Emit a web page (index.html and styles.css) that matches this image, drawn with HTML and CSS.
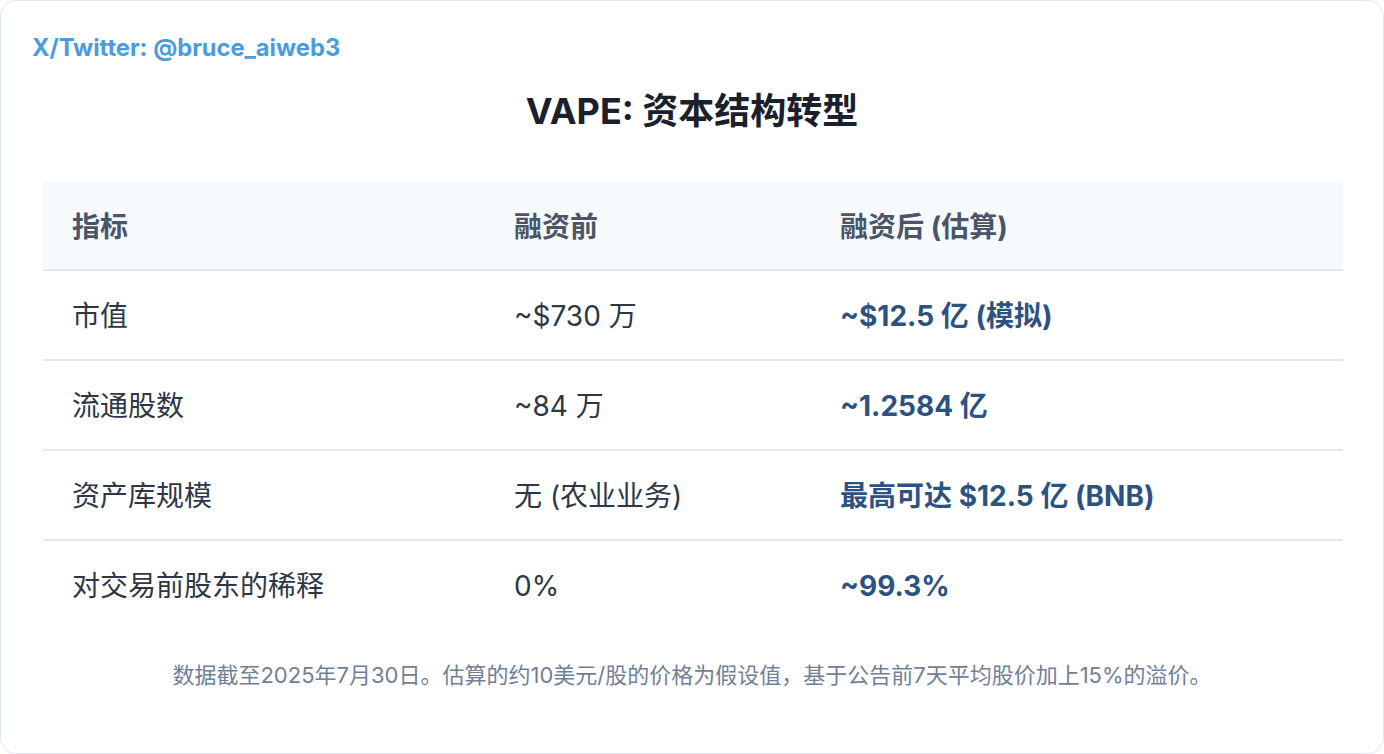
FILE: index.html
```html
<!DOCTYPE html>
<html lang="zh-CN">
<head>
<meta charset="utf-8">
<title>VAPE: 资本结构转型</title>
<link rel="stylesheet" href="styles.css">
</head>
<body>
<div class="card">
  <div class="handle">X/Twitter: @bruce_aiweb3</div>
  <h1 class="title">VAPE: 资本结构转型</h1>
  <table class="data">
    <colgroup>
      <col class="c1"><col class="c2"><col class="c3">
    </colgroup>
    <thead>
      <tr><th>指标</th><th>融资前</th><th>融资后 (估算)</th></tr>
    </thead>
    <tbody>
      <tr><td>市值</td><td>~$730 万</td><td class="hl">~$12.5 亿 (模拟)</td></tr>
      <tr><td>流通股数</td><td>~84 万</td><td class="hl">~1.2584 亿</td></tr>
      <tr><td>资产库规模</td><td>无 (农业业务)</td><td class="hl">最高可达 $12.5 亿 (BNB)</td></tr>
      <tr><td>对交易前股东的稀释</td><td>0%</td><td class="hl">~99.3%</td></tr>
    </tbody>
  </table>
  <p class="note">数据截至2025年7月30日。估算的约10美元/股的价格为假设值，基于公告前7天平均股价加上15%的溢价。</p>
</div>
</body>
</html>
```

FILE: styles.css
```css
* { box-sizing: border-box; }
html, body { margin: 0; padding: 0; background: #ffffff; }
body {
  width: 1384px;
  height: 754px;
  font-family: "Inter", "Liberation Sans", "Noto Sans CJK SC", sans-serif;
}
.card {
  width: 1384px;
  height: 754px;
  border: 1px solid #e2e8f0;
  border-radius: 16px;
  padding: 29px 31px 0 31px;
  background: #ffffff;
  display: flex;
  flex-direction: column;
}
.handle {
  font-size: 23.7px;
  line-height: 36px;
  font-weight: 700;
  color: #4a9ce0;
}
.title {
  margin: 25px 0 0 0;
  text-align: center;
  font-size: 36px;
  line-height: 40px;
  font-weight: 700;
  color: #1a202c;
}
.data {
  margin: 51px 11px 0 11px;
  width: 1300px;
  border-collapse: collapse;
  table-layout: fixed;
}
.c1 { width: 442px; }
.c2 { width: 326px; }
.c3 { width: 532px; }
.data th {
  background: #f7fafc;
  text-align: left;
  font-size: 28px;
  line-height: 39px;
  font-weight: 700;
  color: #4a5568;
  padding: 26px 29px 22px 29px;
  border-bottom: 2px solid #e2e8f0;
}
.data td {
  font-size: 28px;
  line-height: 40px;
  color: #2d3748;
  padding: 25px 29px 23px 29px;
  border-bottom: 2px solid #e2e8f0;
}
.data tbody tr:last-child td { border-bottom: none; }
.data td.hl {
  font-weight: 700;
  color: #2c5282;
}
.note {
  margin: 30px 0 0 0;
  text-align: center;
  font-size: 22px;
  line-height: 32px;
  color: #718096;
}
```
